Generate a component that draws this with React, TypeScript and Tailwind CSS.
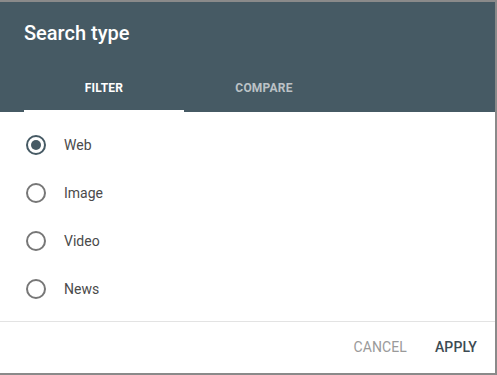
import React from "react";

const items = ["Web", "Image", "Video", "News"];

export default function App() {
  return (
    <div
      className="w-[497px] h-[375px] bg-white"
      style={{ fontFamily: "Roboto, 'Liberation Sans', sans-serif" }}
    >
      <div className="w-[497px] h-[375px] flex flex-col border-t-2 border-r-2 border-b-2 border-[#8a8a8a] bg-white">
        <div className="bg-[#465a64]">
          <div className="h-[62px] px-6 pt-[17px]">
            <div className="text-[20px] leading-[28px] font-medium text-white">Search type</div>
          </div>
          <div className="flex px-6 h-[48px]">
            <div className="w-[160px] flex flex-col">
              <div className="flex-1 flex items-center justify-center pt-[2px] text-[12px] font-bold text-white tracking-[0.2px]">
                FILTER
              </div>
              <div className="h-[2px] bg-white" />
            </div>
            <div className="w-[160px] flex items-center justify-center text-[12px] font-bold text-[#bcc2c6] tracking-[0.2px]">
              COMPARE
            </div>
          </div>
        </div>
        <div className="flex-1 flex flex-col pt-[9px]">
          {items.map((it, i) => (
            <div key={it} className="h-[48px] flex items-center pl-[26px]">
              {i === 0 ? (
                <div className="w-[20px] h-[20px] rounded-full border-2 border-[#465a64] flex items-center justify-center">
                  <div className="w-[10px] h-[10px] rounded-full bg-[#465a64]" />
                </div>
              ) : (
                <div className="w-[20px] h-[20px] rounded-full border-2 border-[#777777]" />
              )}
              <div className="ml-[18px] text-[14px] text-[#4a4a4a]">{it}</div>
            </div>
          ))}
        </div>
        <div className="h-[52px] border-t border-[#e3e3e3] flex items-center justify-end pr-[18px]">
          <div className="text-[14px] text-[#9a9a9a] tracking-[0.1px]">CANCEL</div>
          <div className="ml-[28px] text-[14px] font-medium text-[#3d4b53] tracking-[0.1px]">APPLY</div>
        </div>
      </div>
    </div>
  );
}
